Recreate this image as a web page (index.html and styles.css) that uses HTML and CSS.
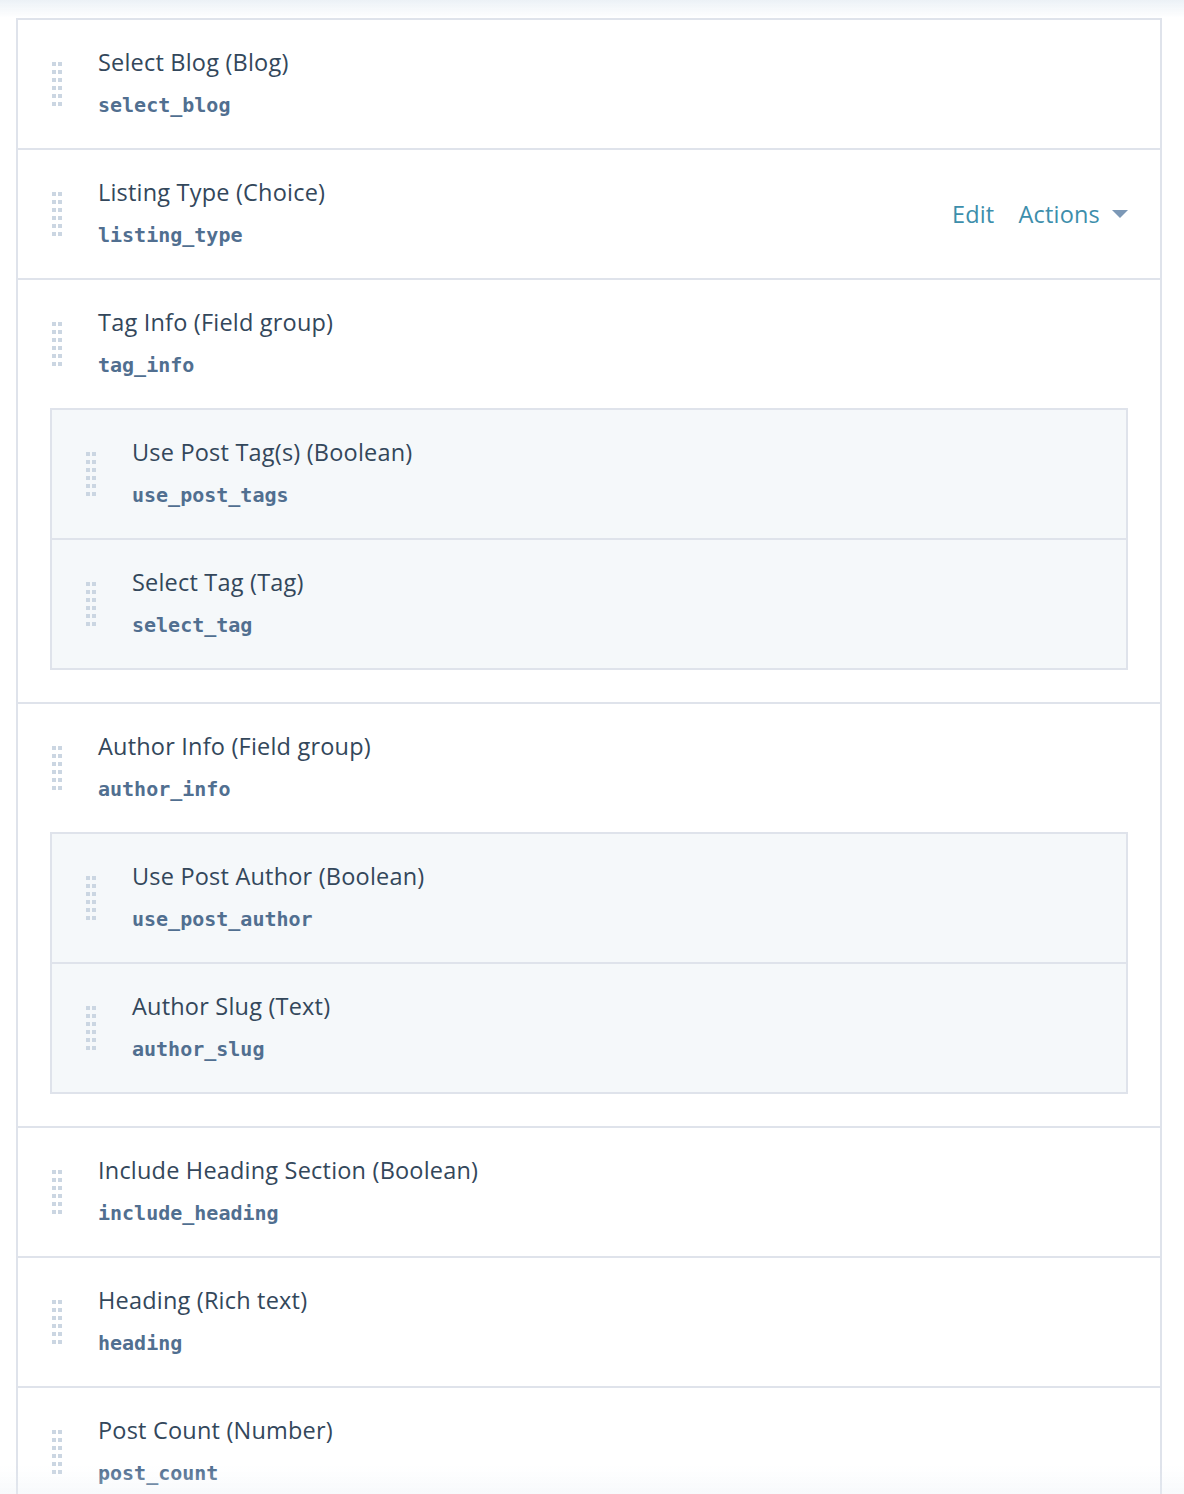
FILE: index.html
```html
<!DOCTYPE html>
<html lang="en">
<head>
<meta charset="utf-8">
<title>Fields</title>
<link rel="stylesheet" href="styles.css">
</head>
<body>
<div class="shade shade-top"></div>
<div class="shade shade-bottom"></div>
<div class="panel">
  <div class="row">
    <div class="head">
      <span class="handle"><i></i><i></i><i></i><i></i><i></i><i></i><i></i><i></i><i></i><i></i><i></i><i></i></span>
      <div class="info"><div class="title">Select Blog (Blog)</div><code class="name">select_blog</code></div>
    </div>
  </div>
  <div class="row">
    <div class="head">
      <span class="handle"><i></i><i></i><i></i><i></i><i></i><i></i><i></i><i></i><i></i><i></i><i></i><i></i></span>
      <div class="info"><div class="title">Listing Type (Choice)</div><code class="name">listing_type</code></div>
      <div class="actions"><a class="link">Edit</a><a class="link dropdown">Actions<span class="caret"></span></a></div>
    </div>
  </div>
  <div class="row group">
    <div class="head">
      <span class="handle"><i></i><i></i><i></i><i></i><i></i><i></i><i></i><i></i><i></i><i></i><i></i><i></i></span>
      <div class="info"><div class="title">Tag Info (Field group)</div><code class="name">tag_info</code></div>
    </div>
    <div class="children">
      <div class="row child">
        <div class="head">
          <span class="handle"><i></i><i></i><i></i><i></i><i></i><i></i><i></i><i></i><i></i><i></i><i></i><i></i></span>
          <div class="info"><div class="title">Use Post Tag(s) (Boolean)</div><code class="name">use_post_tags</code></div>
        </div>
      </div>
      <div class="row child">
        <div class="head">
          <span class="handle"><i></i><i></i><i></i><i></i><i></i><i></i><i></i><i></i><i></i><i></i><i></i><i></i></span>
          <div class="info"><div class="title">Select Tag (Tag)</div><code class="name">select_tag</code></div>
        </div>
      </div>
    </div>
  </div>
  <div class="row group">
    <div class="head">
      <span class="handle"><i></i><i></i><i></i><i></i><i></i><i></i><i></i><i></i><i></i><i></i><i></i><i></i></span>
      <div class="info"><div class="title">Author Info (Field group)</div><code class="name">author_info</code></div>
    </div>
    <div class="children">
      <div class="row child">
        <div class="head">
          <span class="handle"><i></i><i></i><i></i><i></i><i></i><i></i><i></i><i></i><i></i><i></i><i></i><i></i></span>
          <div class="info"><div class="title">Use Post Author (Boolean)</div><code class="name">use_post_author</code></div>
        </div>
      </div>
      <div class="row child">
        <div class="head">
          <span class="handle"><i></i><i></i><i></i><i></i><i></i><i></i><i></i><i></i><i></i><i></i><i></i><i></i></span>
          <div class="info"><div class="title">Author Slug (Text)</div><code class="name">author_slug</code></div>
        </div>
      </div>
    </div>
  </div>
  <div class="row">
    <div class="head">
      <span class="handle"><i></i><i></i><i></i><i></i><i></i><i></i><i></i><i></i><i></i><i></i><i></i><i></i></span>
      <div class="info"><div class="title">Include Heading Section (Boolean)</div><code class="name">include_heading</code></div>
    </div>
  </div>
  <div class="row">
    <div class="head">
      <span class="handle"><i></i><i></i><i></i><i></i><i></i><i></i><i></i><i></i><i></i><i></i><i></i><i></i></span>
      <div class="info"><div class="title">Heading (Rich text)</div><code class="name">heading</code></div>
    </div>
  </div>
  <div class="row">
    <div class="head">
      <span class="handle"><i></i><i></i><i></i><i></i><i></i><i></i><i></i><i></i><i></i><i></i><i></i><i></i></span>
      <div class="info"><div class="title">Post Count (Number)</div><code class="name">post_count</code></div>
    </div>
  </div>
</div>
</body>
</html>
```
FILE: styles.css
```css
html, body {
  margin: 0;
  padding: 0;
  background: #ffffff;
}
body {
  font-family: "Open Sans", Lato, sans-serif;
  color: #33475b;
  height: 1494px;
  overflow: hidden;
}
.shade {
  position: fixed;
  left: 0;
  right: 0;
  pointer-events: none;
  z-index: 5;
}
.shade-top {
  top: 0;
  height: 18px;
  background: linear-gradient(to bottom, rgba(234, 240, 246, 0.9), rgba(255, 255, 255, 0));
}
.shade-bottom {
  bottom: 0;
  height: 28px;
  background: linear-gradient(to top, rgba(234, 240, 246, 0.35), rgba(255, 255, 255, 0));
}
.panel {
  margin: 18px 0 0 16px;
  width: 1146px;
  box-sizing: border-box;
  border: 2px solid #dfe3eb;
  border-bottom: none;
  background: #fff;
}
.row {
  border-bottom: 2px solid #dfe3eb;
}
.row:last-child {
  border-bottom: none;
}
.head {
  height: 128px;
  display: flex;
  align-items: center;
  padding: 0 32px 0 34px;
  box-sizing: border-box;
}
.handle {
  display: grid;
  grid-template-columns: 4px 4px;
  grid-auto-rows: 4px;
  column-gap: 2px;
  row-gap: 4px;
  width: 10px;
  margin-right: 36px;
  align-self: center;
}
.handle i {
  display: block;
  width: 4px;
  height: 4px;
  background: #cbd6e2;
}
.info {
  flex: 1;
  display: flex;
  flex-direction: column;
  margin-top: -3px;
}
.title {
  font-size: 23.5px;
  letter-spacing: 0.2px;
  line-height: 30px;
  color: #33475b;
}
.name {
  font-family: "DejaVu Sans Mono", "Liberation Mono", monospace;
  font-weight: 700;
  font-size: 20px;
  line-height: 28px;
  color: #516f90;
  margin-top: 14px;
}
.actions {
  display: flex;
  align-items: center;
  gap: 24px;
}
.link {
  font-size: 23.5px;
  letter-spacing: 0.2px;
  line-height: 30px;
  color: #3d8eab;
  cursor: pointer;
}
.dropdown {
  display: flex;
  align-items: center;
}
.caret {
  display: inline-block;
  width: 0;
  height: 0;
  margin-left: 12px;
  border-left: 8px solid transparent;
  border-right: 8px solid transparent;
  border-top: 8px solid #7c98b6;
}
.children {
  margin: 0 32px 32px 32px;
  border: 2px solid #dfe3eb;
  background: #f5f8fa;
}
.child {
  background: #f5f8fa;
}
```
